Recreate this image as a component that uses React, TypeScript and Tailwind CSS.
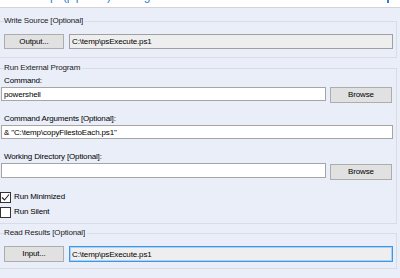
import React from 'react';

const FONT = "font-['Liberation_Sans',Arial,sans-serif] text-[8px] tracking-[-0.15px]";

function Group({ title, className, children }: { title: string; className: string; children: React.ReactNode }) {
  return (
    <fieldset className={`w-[397px] border border-l-0 border-[#D9DCE4] ${className}`}>
      <legend className="ml-[4px] pr-[2px] leading-[12px] text-[#1a1a1a]">{title}</legend>
      {children}
    </fieldset>
  );
}

function WinButton({ label, className }: { label: string; className: string }) {
  return (
    <button className={`bg-[#E1E1E1] border border-[#ADADAD] text-[#000] leading-none flex items-center justify-center ${className}`}>
      {label}
    </button>
  );
}

function Field({ value, className }: { value: string; className: string }) {
  return (
    <input
      readOnly
      value={value}
      className={`px-[2px] text-[#000] leading-none outline-none ${FONT} ${className}`}
    />
  );
}

function Check({ label, checked }: { label: string; checked: boolean }) {
  return (
    <div className="h-[14px] flex items-center gap-[3px]">
      <div className="w-[11px] h-[11px] border border-[#333] bg-white flex items-center justify-center">
        {checked && (
          <svg width="9" height="9" viewBox="0 0 9 9">
            <path d="M1 4.5 L3.5 7 L8 1.5" fill="none" stroke="#222" strokeWidth="1.1" />
          </svg>
        )}
      </div>
      <span className="text-[#000]">{label}</span>
    </div>
  );
}

export default function App() {
  return (
    <div className={`w-[400px] h-[278px] overflow-hidden bg-[#EAEEF8] ${FONT}`}>
      {/* top strip, clipped tab captions from above */}
      <div className="h-[8px] bg-white border-b border-[#D8D2D8] flex overflow-hidden">
        <div className="-mt-[10px] pl-[30px] text-[12px] leading-[12px] text-[#2F7FD3] whitespace-nowrap">
          Script (pipeline) Settings
        </div>
        <div className="ml-auto mr-[11px] w-[2px] h-[3px] bg-[#2F7FD3]" />
      </div>

      <Group title="Write Source [Optional]" className="mt-[7px] pt-[7px] pb-[8px]">
        <div className="flex items-center">
          <WinButton label="Output..." className="ml-[4px] w-[60px] h-[15px]" />
          <Field value="C:\temp\psExecute.ps1" className="ml-[5px] w-[324px] h-[15px] bg-[#EEEEEE] border border-[#A0A0A0]" />
        </div>
      </Group>

      <Group title="Run External Program" className="mt-[4px] pt-[1px] pb-[4px]">
        <div className="leading-[12px] pl-[4px] text-[#000]">Command:</div>
        <div className="flex items-start h-[16px]">
          <Field value="powershell" className="ml-[1px] w-[325px] h-[14px] bg-white border border-[#A5A5A5]" />
          <WinButton label="Browse" className="ml-[4px] w-[62px] h-[16px]" />
        </div>
        <div className="mt-[10px] leading-[12px] pl-[4px] text-[#000]">Command Arguments [Optional]:</div>
        <Field value={'& "C:\\temp\\copyFilestoEach.ps1"'} className="ml-[1px] w-[392px] h-[14px] bg-white border border-[#A5A5A5]" />
        <div className="mt-[12px] leading-[12px] pl-[4px] text-[#000]">Working Directory [Optional]:</div>
        <div className="flex items-start h-[17px]">
          <Field value="" className="ml-[1px] w-[325px] h-[15px] bg-white border border-[#A5A5A5]" />
          <WinButton label="Browse" className="ml-[4px] mt-[1px] w-[62px] h-[16px]" />
        </div>
        <div className="mt-[10px]">
          <Check label="Run Minimized" checked />
        </div>
        <div className="mt-[1px]">
          <Check label="Run Silent" checked={false} />
        </div>
      </Group>

      <Group title="Read Results [Optional]" className="mt-[3px] pt-[7px] pb-[6px]">
        <div className="flex items-center">
          <WinButton label="Input..." className="ml-[4px] w-[60px] h-[16px]" />
          <Field
            value="C:\temp\psExecute.ps1"
            className="ml-[5px] w-[324px] h-[16px] bg-[#EEEEEE] border border-[#3C97E5] shadow-[inset_0_0_0_1px_#A9D1F5]"
          />
        </div>
      </Group>
    </div>
  );
}
